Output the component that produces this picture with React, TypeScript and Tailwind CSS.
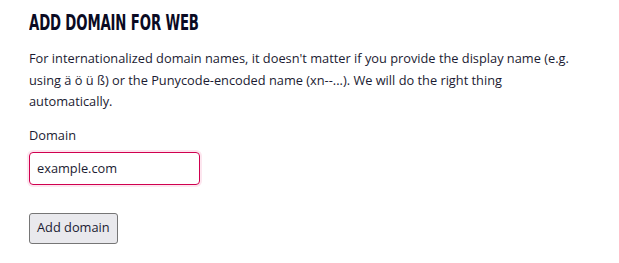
import { useEffect, useRef } from 'react'

export default function App() {
  const inputRef = useRef<HTMLInputElement>(null)

  useEffect(() => {
    const el = inputRef.current
    if (!el) return
    el.focus()
    el.setSelectionRange(el.value.length, el.value.length)
  }, [])

  return (
    <div className="min-h-screen bg-white px-[29px] pt-[8px] text-[#1b1b32] [font-family:'Open_Sans',sans-serif]">
      <h1 className="inline-block origin-left scale-x-[0.67] text-[22px] font-bold uppercase leading-[30px] tracking-[-0.2px] text-[#0a0a23] [font-family:'DejaVu_Sans',sans-serif] [font-stretch:condensed]">
        Add domain for Web
      </h1>
      <p className="mt-[10px] max-w-[555px] text-[12.8px] leading-[21.5px]">
        For internationalized domain names, it doesn't matter if you provide the display name (e.g.
        using ä ö ü ß) or the Punycode-encoded name (xn--...). We will do the right thing
        automatically.
      </p>
      <form className="mt-[12px]" onSubmit={(e) => e.preventDefault()}>
        <label htmlFor="domain" className="block text-[12.8px] leading-[20px]">
          Domain
        </label>
        <input
          ref={inputRef}
          id="domain"
          type="text"
          defaultValue="example.com"
          className="mt-[7px] block h-[33px] w-[171px] rounded-[4px] border border-[#d0004f] px-[7px] text-[12.8px] text-[#1b1b32] caret-[#1b1b32] shadow-[0_0_0_2px_#fde6ef] outline-none"
        />
        <button
          type="submit"
          className="mt-[28px] block h-[31px] rounded-[3px] border border-[#767676] bg-[#e9e9ed] px-[7px] text-[12.8px] text-[#1b1b32]"
        >
          Add domain
        </button>
      </form>
    </div>
  )
}
